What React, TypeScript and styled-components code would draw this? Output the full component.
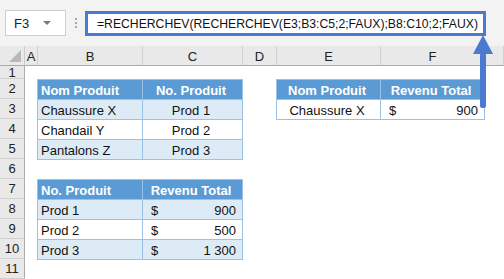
import React from "react";
import styled, { createGlobalStyle } from "styled-components";

const Global = createGlobalStyle`
  html, body { margin: 0; padding: 0; background: #fff; }
  body { font-family: "Liberation Sans", Arial, sans-serif; width: 504px; height: 279px; overflow: hidden; }
`;

const Page = styled.div`
  position: relative;
  width: 504px;
  height: 279px;
  overflow: hidden;
  display: flex;
  flex-direction: column;
`;

const FormulaBar = styled.div`
  height: 47px;
  background: #f3f3f3;
  display: flex;
  align-items: flex-start;
  padding: 10px 0 0 5px;
  box-sizing: border-box;
`;

const NameBox = styled.div`
  width: 61px;
  height: 26px;
  box-sizing: border-box;
  background: #fff;
  border: 1px solid #cfcfcf;
  display: flex;
  align-items: center;
  justify-content: space-between;
  padding: 0 14px 0 8px;
  font-size: 13px;
  color: #222;
`;

const Caret = styled.span`
  width: 0;
  height: 0;
  border-left: 4px solid transparent;
  border-right: 4px solid transparent;
  border-top: 4px solid #7b7b7b;
`;

const Grip = styled.div`
  width: 20px;
  height: 26px;
  display: flex;
  flex-direction: column;
  align-items: center;
  justify-content: center;
  gap: 2px;
  & > span {
    width: 2px;
    height: 2px;
    background: #a8a8a8;
  }
`;

const FormulaBox = styled.div`
  margin-left: -1px;
  margin-top: 1px;
  width: 401px;
  height: 25px;
  box-sizing: border-box;
  border: 3px solid #4a7bd0;
  background: #fff;
  display: flex;
  align-items: center;
  padding-left: 9px;
  font-size: 12.2px;
  color: #111;
  white-space: nowrap;
`;

const Sheet = styled.div`
  display: grid;
  grid-template-columns: 25px 13px 105px 100px 34px 104px 104px 1fr;
  grid-template-rows: 20px 13px repeat(10, 20px);
  flex: 1;
`;

const Corner = styled.div`
  grid-column: 1;
  grid-row: 1;
  background: #e9e9e9;
  border-right: 1px solid #cdcdcd;
  border-bottom: 1px solid #ababab;
  position: relative;
  &::after {
    content: "";
    position: absolute;
    right: 3px;
    bottom: 3px;
    width: 0;
    height: 0;
    border-left: 12px solid transparent;
    border-bottom: 12px solid #b8b8b8;
  }
`;

const ColHead = styled.div<{ $col: number }>`
  grid-column: ${(p) => p.$col};
  grid-row: 1;
  background: #e9e9e9;
  border-right: 1px solid #d0d0d0;
  border-bottom: 1px solid #ababab;
  display: flex;
  align-items: center;
  justify-content: center;
  font-size: 13px;
  color: #222;
  padding-top: 2px;
  box-sizing: border-box;
`;

const RowHead = styled.div<{ $row: number }>`
  grid-column: 1;
  grid-row: ${(p) => p.$row};
  background: #e9e9e9;
  border-right: 1px solid #ababab;
  border-bottom: 1px solid #d0d0d0;
  display: flex;
  align-items: center;
  justify-content: center;
  font-size: 13px;
  color: #222;
  box-sizing: border-box;
  overflow: hidden;
`;

const Table = styled.div<{ $c0: number; $c1: number; $r0: number; $r1: number; $cols: string }>`
  grid-column: ${(p) => p.$c0} / ${(p) => p.$c1};
  grid-row: ${(p) => p.$r0} / ${(p) => p.$r1};
  display: grid;
  grid-template-columns: ${(p) => p.$cols};
  grid-auto-rows: 1fr;
  gap: 1px;
  padding: 1px;
  background: #9bc2e6;
  margin: 0 0 -1px -1px;
`;

type Kind = "head" | "band" | "plain";

const Cell = styled.div<{ $kind: Kind; $align?: "left" | "center" | "right" }>`
  display: flex;
  align-items: center;
  justify-content: ${(p) =>
    p.$align === "center" ? "center" : p.$align === "right" ? "space-between" : "flex-start"};
  padding: 1px 6px 0 3px;
  font-size: 13px;
  white-space: nowrap;
  overflow: hidden;
  font-weight: ${(p) => (p.$kind === "head" ? 700 : 400)};
  color: ${(p) => (p.$kind === "head" ? "#fff" : "#111")};
  background: ${(p) =>
    p.$kind === "head" ? "#5b9bd5" : p.$kind === "band" ? "#ddebf7" : "#fff"};
`;

const Dollar = styled.span`
  padding-left: 5px;
`;

const Arrow = styled.svg`
  position: absolute;
  left: 472px;
  top: 35px;
`;

const cols = ["A", "B", "C", "D", "E", "F", ""];

const Money = ({ v }: { v: string }) => (
  <>
    <Dollar>$</Dollar>
    <span>{v}</span>
  </>
);

export default function App() {
  const rows = Array.from({ length: 11 }, (_, i) => i + 1);
  return (
    <Page>
      <Global />
      <FormulaBar>
        <NameBox>
          <span>F3</span>
          <Caret />
        </NameBox>
        <Grip>
          <span />
          <span />
          <span />
        </Grip>
        <FormulaBox>=RECHERCHEV(RECHERCHEV(E3;B3:C5;2;FAUX);B8:C10;2;FAUX)</FormulaBox>
      </FormulaBar>
      <Sheet>
        <Corner />
        {cols.map((c, i) => (
          <ColHead key={i} $col={i + 2}>
            {c}
          </ColHead>
        ))}
        {rows.map((r) => (
          <RowHead key={r} $row={r + 1}>
            {r}
          </RowHead>
        ))}

        <Table $c0={3} $c1={5} $r0={3} $r1={7} $cols="104px 1fr">
          <Cell $kind="head">Nom Produit</Cell>
          <Cell $kind="head" $align="center">No. Produit</Cell>
          <Cell $kind="band">Chaussure X</Cell>
          <Cell $kind="band" $align="center">Prod 1</Cell>
          <Cell $kind="plain">Chandail Y</Cell>
          <Cell $kind="plain" $align="center">Prod 2</Cell>
          <Cell $kind="band">Pantalons Z</Cell>
          <Cell $kind="band" $align="center">Prod 3</Cell>
        </Table>

        <Table $c0={3} $c1={5} $r0={8} $r1={12} $cols="104px 1fr">
          <Cell $kind="head">No. Produit</Cell>
          <Cell $kind="head" $align="center">Revenu Total</Cell>
          <Cell $kind="band">Prod 1</Cell>
          <Cell $kind="band" $align="right"><Money v="900" /></Cell>
          <Cell $kind="plain">Prod 2</Cell>
          <Cell $kind="plain" $align="right"><Money v="500" /></Cell>
          <Cell $kind="band">Prod 3</Cell>
          <Cell $kind="band" $align="right"><Money v="1 300" /></Cell>
        </Table>

        <Table $c0={6} $c1={8} $r0={3} $r1={5} $cols="103px 1fr">
          <Cell $kind="head" $align="center">Nom Produit</Cell>
          <Cell $kind="head" $align="center">Revenu Total</Cell>
          <Cell $kind="plain" $align="center">Chaussure X</Cell>
          <Cell $kind="plain" $align="right"><Money v="900" /></Cell>
        </Table>
      </Sheet>
      <Arrow width="22" height="76" viewBox="0 0 22 76">
        <polygon points="11,0 21,19 1,19" fill="#4a7bd0" />
        <rect x="8" y="18" width="6" height="55" rx="2" fill="#4a7bd0" />
      </Arrow>
    </Page>
  );
}
